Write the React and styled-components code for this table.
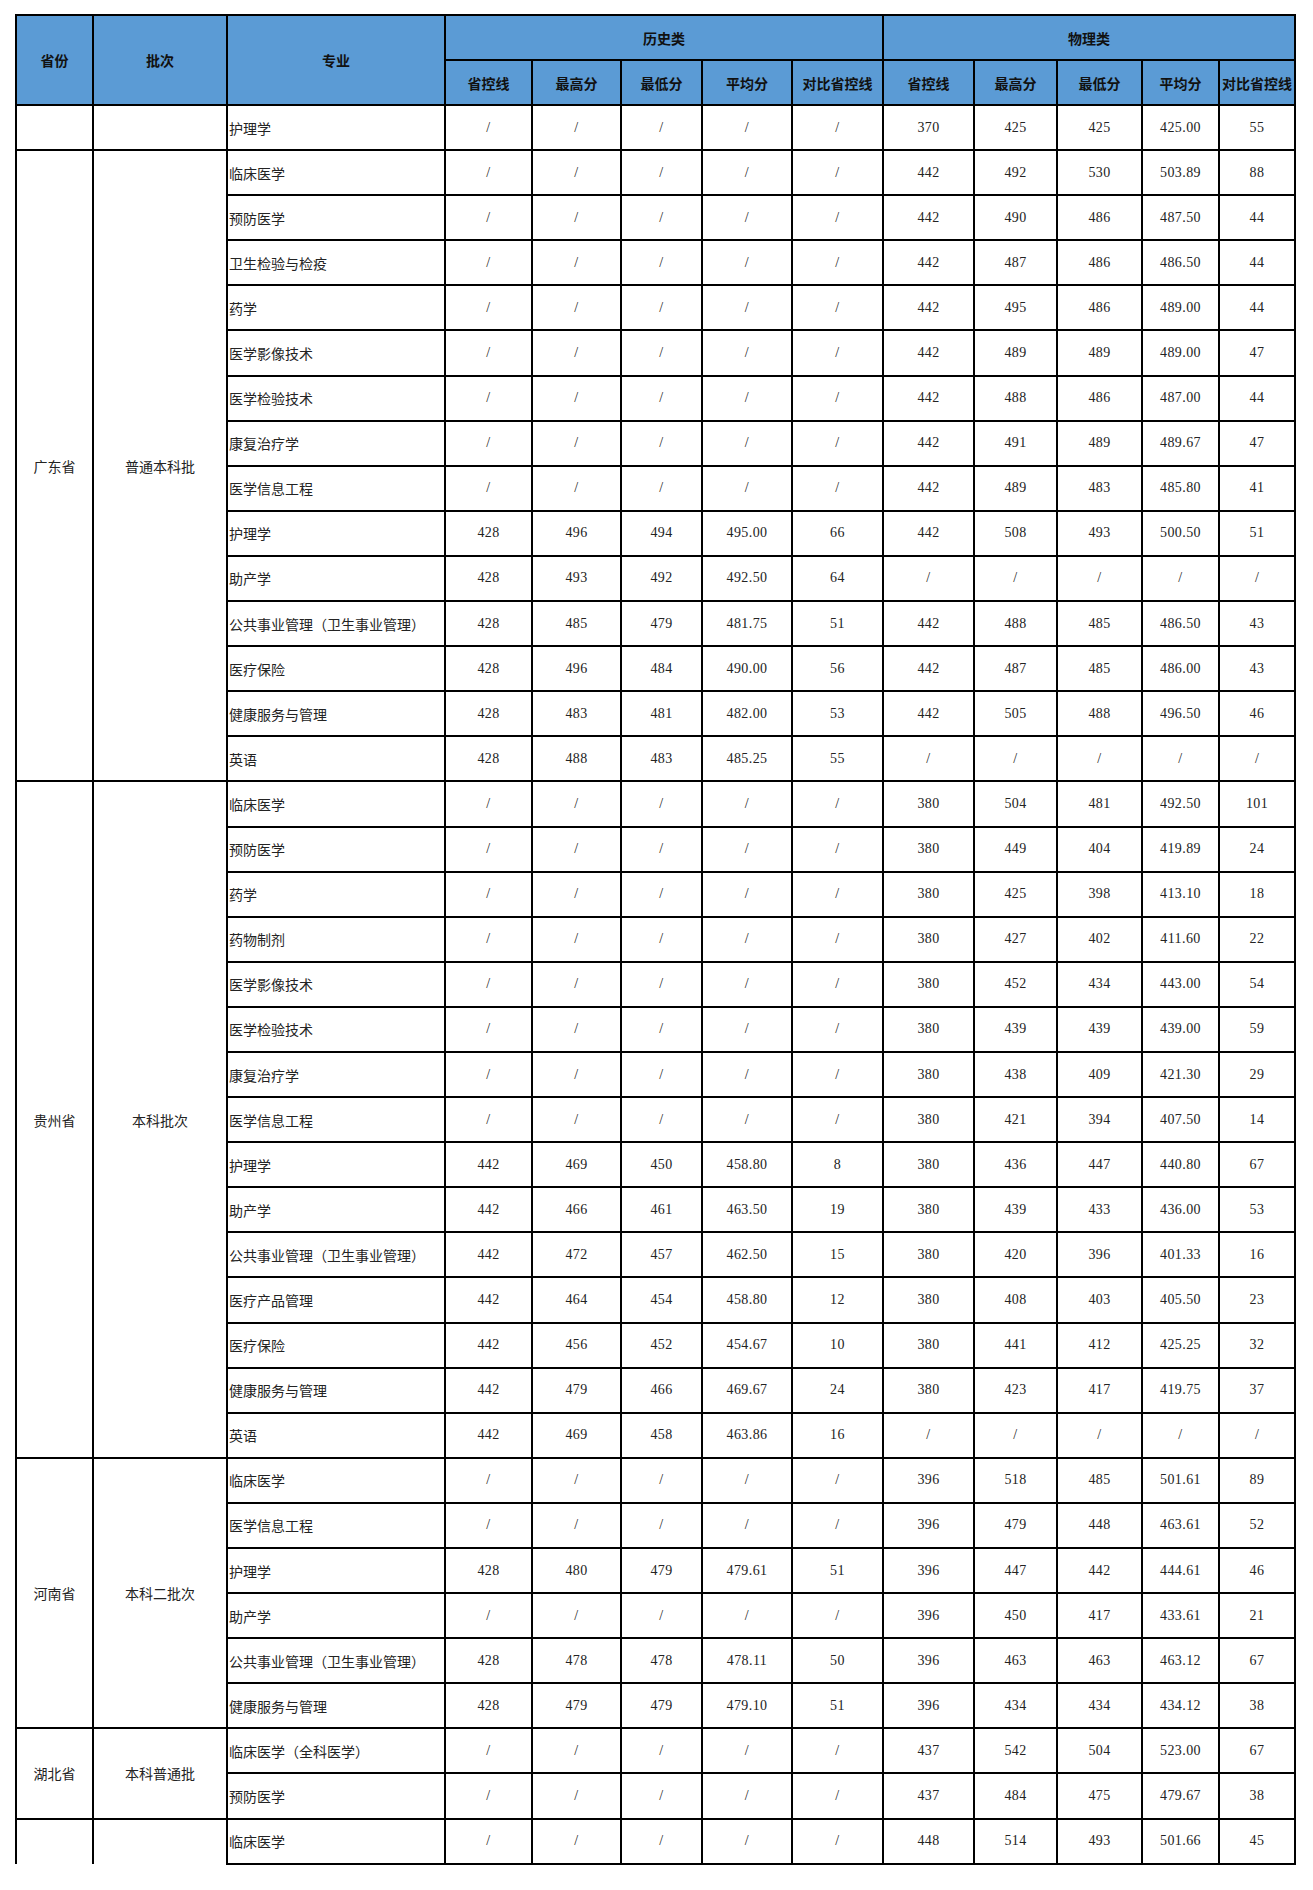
import React from "react";
import styled, { createGlobalStyle } from "styled-components";

const Global = createGlobalStyle`
  html, body { margin: 0; padding: 0; background: #fff; }
  body { font-family: "Noto Sans CJK SC", "Noto Sans", sans-serif; }
`;

const Page = styled.div`
  padding: 14px 0 0 15px;
  min-height: 1876px;
  background: #fff;
`;

const Table = styled.table`
  border-collapse: collapse;
  table-layout: fixed;
  width: 1279px;
`;

const HeadCell = styled.th`
  background: #5b9bd5;
  border: 2px solid #000;
  color: #111;
  font-family: "Noto Sans CJK SC", sans-serif;
  font-weight: 700;
  font-size: 14px;
  height: 43px;
  padding: 0;
  text-align: center;
  vertical-align: middle;
  white-space: nowrap;
`;

const Row = styled.tr``;

const Cell = styled.td`
  border: 2px solid #000;
  border-bottom: ${(p) => (p.$open ? "none" : "2px solid #000")};
  color: #232323;
  font-family: ${(p) =>
    p.$num ? '"Liberation Serif", "Noto Sans CJK SC", serif' : '"Noto Sans CJK SC", sans-serif'};
  font-size: 14px;
  letter-spacing: ${(p) => (p.$num ? "0.4px" : "0")};
  padding: ${(p) => (p.$left ? "0 0 0 1px" : "0")};
  text-align: ${(p) => (p.$left ? "left" : "center")};
  vertical-align: middle;
  white-space: nowrap;
  height: 43.1px;
`;

const widths = [77, 134, 218, 87, 89, 81, 90, 91, 91, 83, 85, 77, 76];

const N = ["/", "/", "/", "/", "/"];
const r = (s) => s.split(" ");

const groups = [
  {
    prov: "",
    batch: "",
    rows: [["护理学", N, r("370 425 425 425.00 55")]],
  },
  {
    prov: "广东省",
    batch: "普通本科批",
    rows: [
      ["临床医学", N, r("442 492 530 503.89 88")],
      ["预防医学", N, r("442 490 486 487.50 44")],
      ["卫生检验与检疫", N, r("442 487 486 486.50 44")],
      ["药学", N, r("442 495 486 489.00 44")],
      ["医学影像技术", N, r("442 489 489 489.00 47")],
      ["医学检验技术", N, r("442 488 486 487.00 44")],
      ["康复治疗学", N, r("442 491 489 489.67 47")],
      ["医学信息工程", N, r("442 489 483 485.80 41")],
      ["护理学", r("428 496 494 495.00 66"), r("442 508 493 500.50 51")],
      ["助产学", r("428 493 492 492.50 64"), N],
      ["公共事业管理（卫生事业管理）", r("428 485 479 481.75 51"), r("442 488 485 486.50 43")],
      ["医疗保险", r("428 496 484 490.00 56"), r("442 487 485 486.00 43")],
      ["健康服务与管理", r("428 483 481 482.00 53"), r("442 505 488 496.50 46")],
      ["英语", r("428 488 483 485.25 55"), N],
    ],
  },
  {
    prov: "贵州省",
    batch: "本科批次",
    rows: [
      ["临床医学", N, r("380 504 481 492.50 101")],
      ["预防医学", N, r("380 449 404 419.89 24")],
      ["药学", N, r("380 425 398 413.10 18")],
      ["药物制剂", N, r("380 427 402 411.60 22")],
      ["医学影像技术", N, r("380 452 434 443.00 54")],
      ["医学检验技术", N, r("380 439 439 439.00 59")],
      ["康复治疗学", N, r("380 438 409 421.30 29")],
      ["医学信息工程", N, r("380 421 394 407.50 14")],
      ["护理学", r("442 469 450 458.80 8"), r("380 436 447 440.80 67")],
      ["助产学", r("442 466 461 463.50 19"), r("380 439 433 436.00 53")],
      ["公共事业管理（卫生事业管理）", r("442 472 457 462.50 15"), r("380 420 396 401.33 16")],
      ["医疗产品管理", r("442 464 454 458.80 12"), r("380 408 403 405.50 23")],
      ["医疗保险", r("442 456 452 454.67 10"), r("380 441 412 425.25 32")],
      ["健康服务与管理", r("442 479 466 469.67 24"), r("380 423 417 419.75 37")],
      ["英语", r("442 469 458 463.86 16"), N],
    ],
  },
  {
    prov: "河南省",
    batch: "本科二批次",
    rows: [
      ["临床医学", N, r("396 518 485 501.61 89")],
      ["医学信息工程", N, r("396 479 448 463.61 52")],
      ["护理学", r("428 480 479 479.61 51"), r("396 447 442 444.61 46")],
      ["助产学", N, r("396 450 417 433.61 21")],
      ["公共事业管理（卫生事业管理）", r("428 478 478 478.11 50"), r("396 463 463 463.12 67")],
      ["健康服务与管理", r("428 479 479 479.10 51"), r("396 434 434 434.12 38")],
    ],
  },
  {
    prov: "湖北省",
    batch: "本科普通批",
    rows: [
      ["临床医学（全科医学）", N, r("437 542 504 523.00 67")],
      ["预防医学", N, r("437 484 475 479.67 38")],
    ],
  },
  {
    prov: "",
    batch: "",
    open: true,
    rows: [["临床医学", N, r("448 514 493 501.66 45")]],
  },
];

const sub = ["省控线", "最高分", "最低分", "平均分", "对比省控线"];

export default function App() {
  return (
    <Page>
      <Global />
      <Table>
        <colgroup>
          {widths.map((w, i) => (
            <col key={i} style={{ width: w }} />
          ))}
        </colgroup>
        <thead>
          <tr>
            <HeadCell rowSpan={2}>省份</HeadCell>
            <HeadCell rowSpan={2}>批次</HeadCell>
            <HeadCell rowSpan={2}>专业</HeadCell>
            <HeadCell colSpan={5}>历史类</HeadCell>
            <HeadCell colSpan={5}>物理类</HeadCell>
          </tr>
          <tr>
            {sub.map((s, i) => (
              <HeadCell key={"h" + i}>{s}</HeadCell>
            ))}
            {sub.map((s, i) => (
              <HeadCell key={"p" + i}>{s}</HeadCell>
            ))}
          </tr>
        </thead>
        <tbody>
          {groups.map((g, gi) =>
            g.rows.map((row, ri) => (
              <Row key={gi + "-" + ri}>
                {ri === 0 && (
                  <>
                    <Cell rowSpan={g.rows.length} $open={g.open}>
                      {g.prov}
                    </Cell>
                    <Cell rowSpan={g.rows.length} $open={g.open}>
                      {g.batch}
                    </Cell>
                  </>
                )}
                <Cell $left>{row[0]}</Cell>
                {row[1].map((v, i) => (
                  <Cell key={"a" + i} $num>
                    {v}
                  </Cell>
                ))}
                {row[2].map((v, i) => (
                  <Cell key={"b" + i} $num>
                    {v}
                  </Cell>
                ))}
              </Row>
            ))
          )}
        </tbody>
      </Table>
    </Page>
  );
}
